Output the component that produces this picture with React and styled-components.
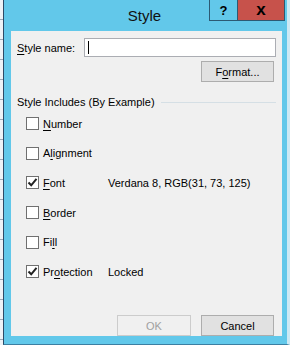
import React, { useState } from 'react';
import styled, { createGlobalStyle } from 'styled-components';

const GlobalStyle = createGlobalStyle`
  html, body {
    margin: 0;
    padding: 0;
    background: #e9eef3;
  }
  body {
    font-family: "Liberation Sans", Arial, sans-serif;
    font-size: 11px;
    color: #000;
  }
`;

const Page = styled.div`
  display: flex;
  width: 290px;
  height: 345px;
  overflow: hidden;
`;

/* sheet visible behind the dialog */
const SheetStrip = styled.div`
  width: 3px;
  flex: none;
  background: repeating-linear-gradient(
    to bottom,
    #eef2f6 0px,
    #eef2f6 19px,
    #9aa9b8 19px,
    #9aa9b8 20px
  );
`;

const Window = styled.div`
  flex: 1;
  display: flex;
  flex-direction: column;
  background: #62c8ea;
  border-left: 1px solid #2d4a66;
  border-right: 3px solid #cde9f4;
  border-bottom: 1px solid #3c7fa2;
`;

const TitleBar = styled.div`
  height: 31px;
  flex: none;
  display: grid;
  grid-template-columns: 1fr auto 1fr;
  align-items: start;
  padding-right: 2px;
`;

const Title = styled.div`
  grid-column: 2;
  font-size: 15px;
  line-height: 31px;
  color: #111;
`;

const TitleButtons = styled.div`
  grid-column: 3;
  display: flex;
  justify-content: flex-end;
`;

const CaptionButton = styled.div`
  height: 21px;
  width: ${p => p.$w}px;
  box-sizing: border-box;
  display: flex;
  align-items: center;
  justify-content: center;
  background: ${p => p.$bg};
  border: 1px solid #2c5a74;
  border-top: none;
  border-left-width: ${p => (p.$first ? 1 : 0)}px;
  font-weight: bold;
  font-size: ${p => p.$size}px;
  color: #000;
`;

const Body = styled.div`
  flex: 1;
  display: flex;
  padding: 0 5px 8px 7px;
`;

const Panel = styled.div`
  flex: 1;
  display: flex;
  flex-direction: column;
  background: #f0f0f0;
`;

const NameRow = styled.div`
  display: flex;
  align-items: center;
  margin-top: 7px;
  padding: 0 6px;
  height: 19px;
`;

const Label = styled.label`
  width: 67px;
  flex: none;
`;

const U = styled.span`
  text-decoration: underline;
  text-underline-offset: 2px;
`;

const TextBox = styled.div`
  flex: 1;
  height: 19px;
  box-sizing: border-box;
  background: #fff;
  border: 1px solid #abadb3;
  display: flex;
  align-items: center;
  padding-left: 3px;
`;

const Caret = styled.div`
  width: 1px;
  height: 13px;
  background: #000;
`;

const FormatRow = styled.div`
  display: flex;
  justify-content: flex-end;
  margin-top: 4px;
  padding-right: 8px;
`;

const Button = styled.div`
  width: ${p => p.$w || 73}px;
  height: 21px;
  box-sizing: border-box;
  display: flex;
  align-items: center;
  justify-content: center;
  background: ${p => (p.$disabled ? '#f0f0f0' : '#e1e1e1')};
  border: 1px solid ${p => (p.$disabled ? '#cccccc' : '#adadad')};
  color: ${p => (p.$disabled ? '#a0a0a0' : '#000')};
`;

const GroupHeader = styled.div`
  display: flex;
  align-items: center;
  gap: 6px;
  margin-top: 13px;
  padding: 0 6px;
  height: 14px;
`;

const GroupLine = styled.div`
  flex: 1;
  height: 1px;
  background: #d5dfe5;
`;

const OptionList = styled.div`
  display: flex;
  flex-direction: column;
  padding-left: 15px;
`;

const OptionRow = styled.div`
  display: flex;
  align-items: center;
  height: 29.6px;
`;

const Box = styled.div`
  width: 13px;
  height: 13px;
  box-sizing: border-box;
  border: 1px solid #707070;
  background: #fff;
  display: flex;
  align-items: center;
  justify-content: center;
  flex: none;
`;

const OptionLabel = styled.div`
  width: 65px;
  margin-left: 4px;
  flex: none;
`;

const Footer = styled.div`
  margin-top: auto;
  display: flex;
  justify-content: flex-end;
  gap: 10px;
  padding-right: 8px;
`;

const Check = () => (
  <svg width="11" height="11" viewBox="0 0 11 11">
    <path d="M1.5 5.5 L4.2 8.3 L9.5 1.8" fill="none" stroke="#222" strokeWidth="2" />
  </svg>
);

const renderLabel = (text, idx) => (
  <>
    {text.slice(0, idx)}
    <U>{text[idx]}</U>
    {text.slice(idx + 1)}
  </>
);

const App = () => {
  const [options] = useState([
    { name: 'Number', key: 0, checked: false },
    { name: 'Alignment', key: 1, checked: false },
    { name: 'Font', key: 0, checked: true, detail: 'Verdana 8, RGB(31, 73, 125)' },
    { name: 'Border', key: 0, checked: false },
    { name: 'Fill', key: 2, checked: false },
    { name: 'Protection', key: 2, checked: true, detail: 'Locked' },
  ]);

  return (
    <>
      <GlobalStyle />
      <Page>
        <SheetStrip />
        <Window>
          <TitleBar>
            <Title>Style</Title>
            <TitleButtons>
              <CaptionButton $w={29} $bg="#62c8ea" $size={13} $first>?</CaptionButton>
              <CaptionButton $w={47} $bg="#c7524b" $size={17}>x</CaptionButton>
            </TitleButtons>
          </TitleBar>
          <Body>
            <Panel>
              <NameRow>
                <Label><U>S</U>tyle name:</Label>
                <TextBox><Caret /></TextBox>
              </NameRow>
              <FormatRow>
                <Button>F<U>o</U>rmat...</Button>
              </FormatRow>
              <GroupHeader>
                <span>Style Includes (By Example)</span>
                <GroupLine />
              </GroupHeader>
              <OptionList>
                {options.map(o => (
                  <OptionRow key={o.name}>
                    <Box>{o.checked && <Check />}</Box>
                    <OptionLabel>{renderLabel(o.name, o.key)}</OptionLabel>
                    {o.detail && <span>{o.detail}</span>}
                  </OptionRow>
                ))}
              </OptionList>
              <Footer>
                <Button $disabled $w={74}>OK</Button>
                <Button>Cancel</Button>
              </Footer>
            </Panel>
          </Body>
        </Window>
      </Page>
    </>
  );
};

export default App;
